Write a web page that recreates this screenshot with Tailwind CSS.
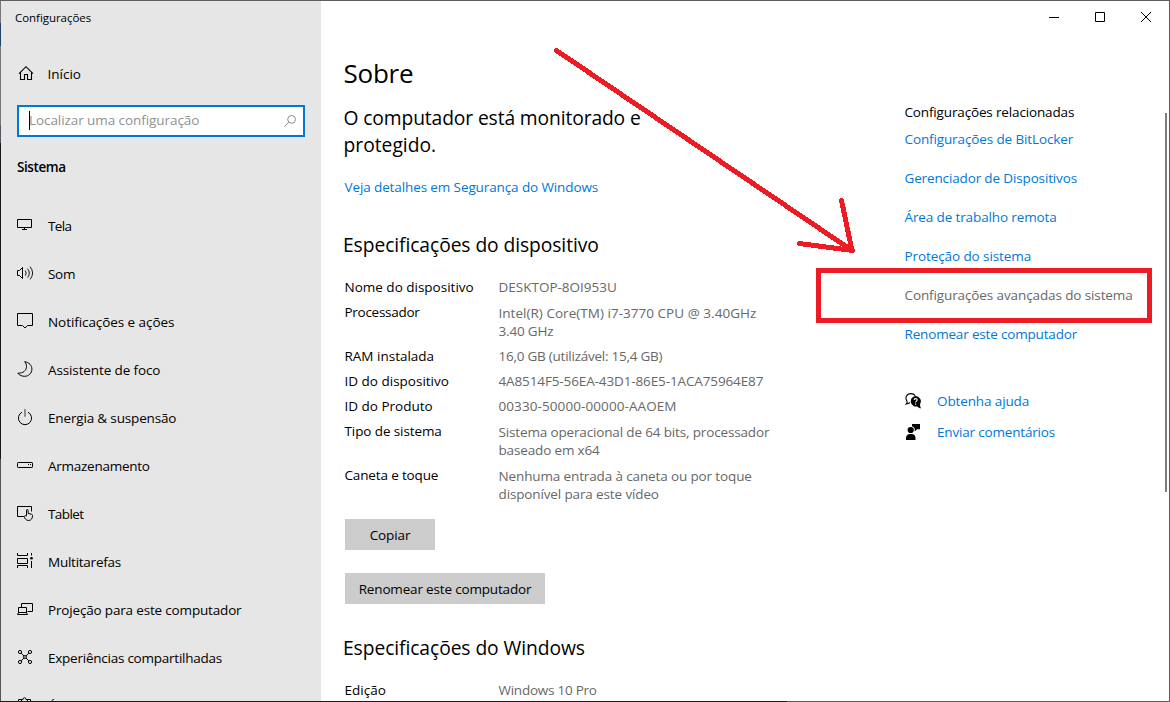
<!DOCTYPE html>
<html lang="pt-BR">
<head>
<meta charset="utf-8">
<title>Configurações</title>
<script src="https://cdn.jsdelivr.net/npm/@tailwindcss/browser@4"></script>
</head>
<body class="overflow-hidden bg-white">
<div class="relative flex h-[702px] w-[1170px] flex-col overflow-hidden bg-white font-['Open_Sans','Noto_Sans',sans-serif] text-[13.5px] leading-5 whitespace-nowrap text-black">
  <div class="h-px shrink-0 bg-[#5f5d5f]"></div>
  <div class="flex h-[700px] shrink-0 overflow-hidden">
    <!-- desktop showing at the window's left edge -->
    <div class="flex w-px shrink-0 flex-col bg-[#55565a]">
      <div class="h-[22px] bg-[#777]"></div><div class="h-[23px] bg-[#1f426b]"></div><div class="h-[79px] bg-[#777]"></div><div class="h-[18px] bg-[#55565f]"></div><div class="h-[316px] bg-[#19191b]"></div>
    </div>
    <aside class="flex w-80 shrink-0 flex-col overflow-hidden bg-[#e6e6e6]">
      <div class="h-[33px] shrink-0 pl-3.5 text-[11.5px] leading-[33px] tracking-[-0.05px]">Configurações</div>
      <a class="mt-4 flex h-12 shrink-0 items-center pl-[17px]">
        <svg class="-mt-0.5 mr-[13.5px] size-4" viewBox="0 0 16 16" fill="none" stroke="#000" stroke-width="1.1"><path d="M1 8.7 8 1.7l7 7M2.5 7.5v7h4V9.500h3v5h4v-7"/></svg>Início</a>
      <div class="mt-[7px] ml-4 flex h-8 w-72 shrink-0 items-center justify-between border-2 border-[#0078d7] bg-white pr-[7px] pl-2.5">
        <div class="flex items-center text-[#929292]"><span class="-mt-px h-[19px] w-px bg-black"></span><span class="-ml-px pb-0.5 tracking-[-0.07px]">Localizar uma configuração</span></div>
        <svg class="size-3" viewBox="0 0 12 12" fill="none" stroke="#8c8c8c"><circle cx="7.600" cy="4.400" r="3.900"/><path d="M4.800 7.200.400 11.600"/></svg>
      </div>
      <h2 class="mt-5 shrink-0 pl-4 font-semibold tracking-[-0.42px]">Sistema</h2>
      <nav class="mt-[25px] flex shrink-0 flex-col">
        <a class="flex h-12 items-center gap-[13px] pl-4"><svg class="size-[18px]" viewBox="0 0 18 18" fill="none" stroke="#000"><path d="M.5 2.500h14v8H.500zM7.500 10.500v2M5 12.500h5"/></svg><span class="tracking-[-0.6px]">Tela</span></a>
        <a class="flex h-12 items-center gap-[13px] pl-4"><svg class="size-[18px]" viewBox="0 0 18 18" fill="none" stroke="#000"><path d="M.5 5.500h2l3-3v11l-3-3h-2z"/><path stroke-width=".9" d="M8.300 5.600q1.800 2.500 0 5M10.700 3.700q3.200 4.400 0 8.800M13.100 1.600q5 6.500 0 12.800"/></svg><span class="tracking-[-0.3px]">Som</span></a>
        <a class="flex h-12 items-center gap-[13px] pl-4"><svg class="size-[18px]" viewBox="0 0 18 18" fill="none" stroke="#000"><path d="M.5 .5h15v12h-5L8 15l-2.500-2.500h-5z"/></svg><span class="tracking-[-0.07px]">Notificações e ações</span></a>
        <a class="flex h-12 items-center gap-[13px] pl-4"><svg class="size-[18px]" viewBox="0 0 18 18" fill="none" stroke="#000"><path d="M7.700.700C12.200 1.300 14.900 4.500 14.900 8.100c0 4-3.200 7.200-7.200 7.200-2.800 0-5.400-1-6.900-3.100C6.200 12.400 9.500 9.500 9.500 5.500c0-1.800-.600-3.300-1.800-4.800z"/></svg><span class="tracking-[-0.12px]">Assistente de foco</span></a>
        <a class="flex h-12 items-center gap-[13px] pl-4"><svg class="size-[18px]" viewBox="0 0 18 18" fill="none" stroke="#000"><path d="M5 3.200a6.600 6.600 0 1 0 6 0"/><path stroke="#777" stroke-width="1.600" d="M8 0v7.800"/></svg><span class="tracking-[-0.16px]">Energia &amp; suspensão</span></a>
        <a class="flex h-12 items-center gap-[13px] pl-4"><svg class="size-[18px]" viewBox="0 0 18 18" fill="none" stroke="#000"><rect x=".5" y="5.500" width="15" height="5" rx=".7"/><path d="M11 7.500h1M13 7.500h1"/></svg><span class="tracking-[-0.26px]">Armazenamento</span></a>
        <a class="flex h-12 items-center gap-[13px] pl-4"><svg class="size-[18px]" viewBox="0 0 18 18" fill="none" stroke="#000"><path d="M7 11.500H.500v-10h14v5"/><path d="M9.500 10.500V5.300q0-.8.8-.8t.8.800v3.200l3.400.7q1 .3 1 1.300c0 2.700-1 5-4 5-2.500 0-4.200-2.500-4.200-4.200q.8-1.300 2.200-.3z"/></svg><span class="tracking-[-0.6px]">Tablet</span></a>
        <a class="flex h-12 items-center gap-[13px] pl-4"><svg class="size-[18px]" viewBox="0 0 18 18" fill="none" stroke="#000"><path d="M.5 0v2.500h10V0M.500 5.500h10v5H.500zM.500 15v-2.500h10V15M14.500 0v2.500M14.500 8v7"/><circle cx="14.500" cy="5.300" r="1.300" fill="#000" stroke="none"/></svg><span class="tracking-[-0.25px]">Multitarefas</span></a>
        <a class="flex h-12 items-center gap-[13px] pl-4"><svg class="size-[18px]" viewBox="0 0 18 18" fill="none" stroke="#000"><path d="M4.500 6V2.500h11v8h-5M1.500 12V6.500h8V12M1.500 11.500h8l1 2H.500z"/></svg><span class="tracking-[-0.17px]">Projeção para este computador</span></a>
        <a class="flex h-12 items-center gap-[13px] pl-4"><svg class="size-[18px]" viewBox="0 0 18 18" fill="none" stroke="#000"><circle cx="3" cy="3" r="1.600"/><circle cx="13" cy="3" r="1.600"/><circle cx="3" cy="13" r="1.600"/><circle cx="13" cy="13" r="1.600"/><circle cx="8" cy="8" r="1.400"/><path d="m4.200 4.200 2.800 2.800m2 2 2.800 2.800m0-7.600L9 7M7 9l-2.800 2.800"/></svg><span class="tracking-[-0.24px]">Experiências compartilhadas</span></a>
        <a class="flex h-12 items-center gap-[13px] pl-4"><svg class="size-[18px]" viewBox="0 0 18 18" fill="none" stroke="#000"><path d="M4.500 4.500v-2h1.500q0-1.800 1.500-1.800t1.500 1.800h1.500v2zM4.500 2.500h-3v13h12v-13h-3"/></svg><span class="tracking-[-0.15px]">Área de Transferência</span></a>
      </nav>
    </aside>
    <main class="w-[583.5px] shrink-0 pl-[23.5px]">
      <h1 class="mt-[54px] -ml-px text-[26px] leading-9 tracking-[-0.24px]">Sobre</h1>
      <div class="mt-[13px] -ml-px text-[19.25px] leading-[27px] tracking-[-0.12px]">O computador está monitorado e<br><span class="tracking-normal">protegido.</span></div>
      <a class="mt-[19px] block tracking-[-0.11px] text-[#0078d7]">Veja detalhes em Segurança do Windows</a>
      <h2 class="mt-[34px] -ml-[1.500px] text-[19.25px] leading-[27px] tracking-[-0.08px]">Especificações do dispositivo</h2>
      <dl class="mt-[19px] grid grid-cols-[154px_1fr] grid-rows-[25px_44px_25px_25px_25px_44px_38px] [&>dd]:text-[#686868]">
        <dt>Nome do dispositivo</dt><dd>DESKTOP-8OI953U</dd>
        <dt class="tracking-[-0.28px]">Processador</dt><dd class="pt-0.5 leading-[18px] tracking-[0.03px]">Intel(R) Core(TM) i7-3770 CPU @ 3.40GHz<br><span class="tracking-[-0.17px]">3.40 GHz</span></dd>
        <dt>RAM instalada</dt><dd class="tracking-[-0.24px]">16,0 GB (utilizável: 15,4 GB)</dd>
        <dt>ID do dispositivo</dt><dd class="tracking-[-0.12px]">4A8514F5-56EA-43D1-86E5-1ACA75964E87</dd>
        <dt>ID do Produto</dt><dd class="tracking-[0.09px]">00330-50000-00000-AAOEM</dd>
        <dt class="tracking-[-0.1px]">Tipo de sistema</dt><dd class="pt-0.5 leading-[18px] tracking-[-0.15px]">Sistema operacional de 64 bits, processador<br>baseado em x64</dd>
        <dt class="tracking-[-0.15px]">Caneta e toque</dt><dd class="pt-0.5 leading-[18px] tracking-[-0.13px]">Nenhuma entrada à caneta ou por toque<br>disponível para este vídeo</dd>
      </dl>
      <button class="mt-4 ml-[0.500px] block h-[31px] w-[90px] bg-[#ccc] tracking-[-0.1px]">Copiar</button>
      <button class="mt-[23px] ml-[0.500px] block h-[31px] w-[200px] bg-[#ccc] tracking-[-0.17px]">Renomear este computador</button>
      <h2 class="mt-[30px] -ml-[1.500px] text-[19.25px] leading-[27px] tracking-[-0.08px]">Especificações do Windows</h2>
      <dl class="mt-[19px] grid grid-cols-[154px_1fr] [&>dd]:text-[#686868]"><dt>Edição</dt><dd class="tracking-[-0.25px]">Windows 10 Pro</dd></dl>
    </main>
    <section class="flex w-[264.5px] shrink-0 flex-col">
      <div class="flex h-8 justify-end gap-9 pt-[11px] pr-[18px]">
        <svg class="size-[10px]" viewBox="0 0 10 10" stroke="#000"><path d="M0 5.500h10"/></svg>
        <svg class="size-[10px]" viewBox="0 0 10 10" fill="none" stroke="#000"><path d="M.5 .5h9v9h-9z"/></svg>
        <svg class="size-[10px]" viewBox="0 0 10 10" stroke="#000"><path d="m0 0 10 10M10 0 0 10"/></svg>
      </div>
      <h3 class="mt-[69px] tracking-[-0.15px]">Configurações relacionadas</h3>
      <div class="mt-[7px] flex flex-col gap-[19px] text-[#0078d7]">
        <a class="tracking-[-0.12px]">Configurações de BitLocker</a>
        <a class="tracking-[-0.14px]">Gerenciador de Dispositivos</a>
        <a class="tracking-[-0.12px]">Área de trabalho remota</a>
        <a class="tracking-[-0.09px]">Proteção do sistema</a>
        <a class="tracking-[-0.11px] text-[#686868]">Configurações avançadas do sistema</a>
        <a class="tracking-[-0.17px]">Renomear este computador</a>
      </div>
      <div class="mt-[47px] flex flex-col gap-[11px] text-[#0078d7]">
        <a class="flex h-5 items-center gap-4"><svg class="ml-[0.500px] size-4" viewBox="0 0 16 16"><path fill="none" stroke="#000" stroke-width="1.100" d="M5 9.500Q3.500 10.800 1.300 11 2.500 9.800 2 8.200C-.2 5 1.300.600 5.800.600c2 0 3.600.8 4.500 2.200"/><path d="M10.500 3a5.300 5.300 0 0 1 4.600 8c-.2 1.800.200 3 .9 4.300-1.600-.2-2.700-.9-3.600-1.900A5.300 5.300 0 1 1 10.500 3z"/><path fill="none" stroke="#fff" stroke-width="1.100" d="M9 6.900c.100-1.800 3.300-1.700 3.200.1 0 1.100-1.600 1.200-1.600 2.600M10.600 10.500v1.200"/></svg><span class="tracking-[-0.12px]">Obtenha ajuda</span></a>
        <a class="flex h-5 items-center gap-4"><svg class="ml-[0.500px] size-4" viewBox="0 0 16 16"><circle cx="5.700" cy="6" r="3.100"/><path d="M1 16v-2.200Q1.500 10 5 10h1.600q3.700 0 3.900 3.800V16zM7 0h8v5.300h-3l-2.300 2.200V4.800Q9.300 3 7 2.300z"/></svg><span class="tracking-[-0.18px]">Enviar comentários</span></a>
      </div>
    </section>
  </div>
  <div class="flex h-px shrink-0"><div class="w-[787px] bg-[#1c1c1e]"></div><div class="grow bg-[#5f5d5f]"></div></div>
  <!-- window edge and scroll bar thumb -->
  <div class="absolute top-0 right-0 h-full w-px bg-[#5f5d5f]"></div>
  <div class="absolute top-[113px] left-[1165px] h-[379px] w-[2px] bg-[#7c7c7c]"></div>
  <!-- red annotations -->
  <div class="absolute top-[268px] left-[816px] h-[55px] w-[336px] border-[5px] border-[#ed1c24]"></div>
  <svg class="absolute top-0 left-0 h-[702px] w-[1170px]" viewBox="0 0 1170 702" fill="none" stroke="#ed1c24" stroke-width="5" stroke-linecap="round" shape-rendering="crispEdges"><path d="M556.500 50.500 852 250.500M841.500 200.500l10.500 50M799.500 243.500l53 7"/></svg>
</div>
</body>
</html>
